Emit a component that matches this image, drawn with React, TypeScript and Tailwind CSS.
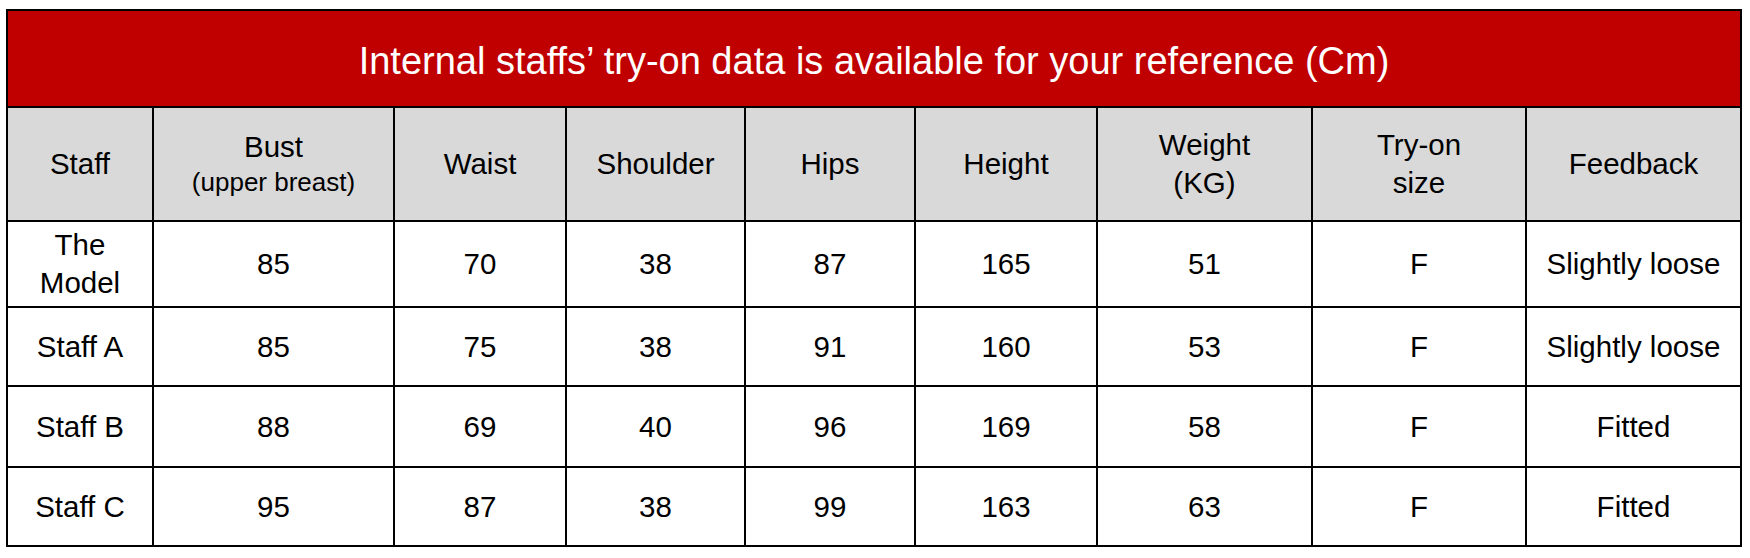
import React from "react";

const cols = ["w-[144px]", "w-[239px]", "w-[170px]", "w-[177px]", "w-[168px]", "w-[180px]", "w-[213px]", "w-[212px]", "w-[213px]"];

const rows: { h: string; cells: string[][] }[] = [
  { h: "h-[84px]", cells: [["The", "Model"], ["85"], ["70"], ["38"], ["87"], ["165"], ["51"], ["F"], ["Slightly loose"]] },
  { h: "h-[77px]", cells: [["Staff A"], ["85"], ["75"], ["38"], ["91"], ["160"], ["53"], ["F"], ["Slightly loose"]] },
  { h: "h-[79px]", cells: [["Staff B"], ["88"], ["69"], ["40"], ["96"], ["169"], ["58"], ["F"], ["Fitted"]] },
  { h: "h-[77px]", cells: [["Staff C"], ["95"], ["87"], ["38"], ["99"], ["163"], ["63"], ["F"], ["Fitted"]] },
];

export default function App() {
  return (
    <div className="w-[1750px] h-[558px] bg-white pl-[6px] pt-[9px]" style={{ fontFamily: '"Liberation Sans", Arial, sans-serif' }}>
      <div className="inline-flex flex-col gap-[2px] bg-black p-[2px] text-black">
        <div className="h-[95px] bg-[#c00000] flex items-center justify-center text-white text-[38px] leading-none pt-[4px]">
          Internal staffs’ try-on data is available for your reference (Cm)
        </div>
        <div className="flex gap-[2px] h-[112px]">
          <div className={`${cols[0]} bg-[#d9d9d9] flex items-center justify-center text-[29.5px]`}>Staff</div>
          <div className={`${cols[1]} bg-[#d9d9d9] flex flex-col items-center justify-center`}>
            <span className="text-[29.5px] leading-[36px]">Bust</span>
            <span className="text-[26px] leading-[34px]">(upper breast)</span>
          </div>
          <div className={`${cols[2]} bg-[#d9d9d9] flex items-center justify-center text-[29.5px]`}>Waist</div>
          <div className={`${cols[3]} bg-[#d9d9d9] flex items-center justify-center text-[29.5px]`}>Shoulder</div>
          <div className={`${cols[4]} bg-[#d9d9d9] flex items-center justify-center text-[29.5px]`}>Hips</div>
          <div className={`${cols[5]} bg-[#d9d9d9] flex items-center justify-center text-[29.5px]`}>Height</div>
          <div className={`${cols[6]} bg-[#d9d9d9] flex flex-col items-center justify-center text-[29.5px] leading-[38px]`}>
            <span>Weight</span>
            <span>(KG)</span>
          </div>
          <div className={`${cols[7]} bg-[#d9d9d9] flex flex-col items-center justify-center text-[29.5px] leading-[38px]`}>
            <span>Try-on</span>
            <span>size</span>
          </div>
          <div className={`${cols[8]} bg-[#d9d9d9] flex items-center justify-center text-[29.5px]`}>Feedback</div>
        </div>
        {rows.map((r, i) => (
          <div key={i} className={`flex gap-[2px] ${r.h}`}>
            {r.cells.map((c, j) => (
              <div key={j} className={`${cols[j]} bg-white flex flex-col items-center justify-center text-[29.5px] leading-[38px]`}>
                {c.map((t, k) => (
                  <span key={k}>{t}</span>
                ))}
              </div>
            ))}
          </div>
        ))}
      </div>
    </div>
  );
}
